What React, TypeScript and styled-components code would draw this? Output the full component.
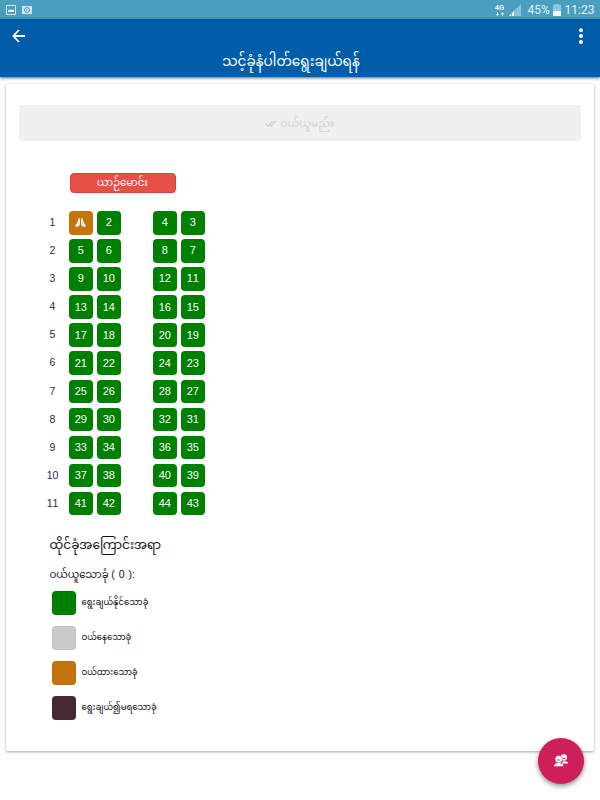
import React from 'react';
import styled, { createGlobalStyle } from 'styled-components';

const Global = createGlobalStyle`
  * { box-sizing: border-box; }
  body { margin: 0; background: #fefefe; font-family: Lato, "Noto Sans Myanmar", Padauk, sans-serif; color: #111; }
`;
const Screen = styled.div`
  position: relative; width: 600px; height: 800px; overflow: hidden;
`;
const StatusBar = styled.div`
  height: 19px; background: #4a9fc0; display: flex; align-items: center;
  padding: 0 7px 0 6px; color: #e3f1f6; font: 12px Roboto, sans-serif;
`;
const StatusIcon = styled.svg<{ $gap: number }>`
  display: block; flex: none; margin-right: ${p => p.$gap}px;
`;
const Spacer = styled.div` flex: 1; `;
const Network = styled.div`
  width: 12px; height: 14px; margin-right: 3px; font: 700 7.5px/9px Roboto, sans-serif; text-align: center;
  svg { display: block; margin: 0 auto; }
`;
const StatusText = styled.span<{ $w: number }>`
  width: ${p => p.$w}px; white-space: nowrap;
`;
const Header = styled.header`
  height: 58px; background: #005da9; color: #fff; box-shadow: 0 1px 3px rgba(0,0,0,.6);
  position: relative;
`;
const Actions = styled.div`
  height: 29px; padding: 9px 16px 0 12px; display: flex; justify-content: space-between;
  svg { display: block; }
`;
const Title = styled.h1`
  margin: 0; width: 582px; text-align: center; font-size: 13.7px; line-height: 25px; font-weight: 400; white-space: nowrap;
`;
const Card = styled.main`
  margin: 7px 6px 0; height: 667px; background: #fff; padding: 21px 13px; border-radius: 2px;
  box-shadow: 0 1px 3px rgba(0,0,0,.35);
`;
const BuyButton = styled.button`
  width: 562px; height: 36px; border: 0; background: #f0f0f0; color: #d2d2d2; display: flex;
  align-items: center; justify-content: center; gap: 3px; font: inherit; font-size: 10.5px; padding: 2px 0 0;
`;
const Driver = styled.div`
  width: 106px; height: 20px; margin: 32px 0 0 50.5px; background: #e75047; border: 1px solid #e03c32;
  border-radius: 4px; color: #fff; text-align: center; font-size: 10.2px; line-height: 17px; white-space: nowrap;
`;
const Seats = styled.div`
  margin: 18px 0 0 23px; display: grid; grid-template-columns: 22px 23px 23px 23px 23px;
  column-gap: 5px; grid-auto-rows: 23.1px; row-gap: 5px; font-family: "Liberation Sans", sans-serif; font-kerning: none;
`;
const RowNumber = styled.div`
  color: #25294e; font-size: 10.5px; line-height: 23px; text-align: center; width: 21px;
`;
const Seat = styled.div<{ $sold?: boolean; $aisle?: boolean }>`
  width: 23.5px; height: 23.5px; border-radius: 4px; background: ${p => (p.$sold ? '#c5730c' : '#008000')};
  color: #fff; font-size: 11px; line-height: 22px; padding-bottom: 1px;
  display: flex; align-items: center; justify-content: center;
  margin-left: ${p => (p.$aisle ? '28px' : '0')};
`;
const Info = styled.section` margin: 16px 0 0 30.5px; `;
const InfoTitle = styled.h2` margin: 0; height: 28px; font-size: 12.2px; line-height: 28px; font-weight: 400; white-space: nowrap; `;
const Selected = styled.div` height: 26px; margin-top: 2px; font-size: 10.2px; line-height: 26px; white-space: nowrap; `;
const Count = styled.span` font: 10.5px "Liberation Sans", sans-serif; word-spacing: 1px; `;
const Legend = styled.ul` list-style: none; margin: 3.5px 0 0 2px; padding: 0; display: flex; flex-direction: column; gap: 11px; `;
const LegendItem = styled.li` height: 24px; display: flex; align-items: center; gap: 6px; font-size: 8.5px; white-space: nowrap; `;
const Swatch = styled.span<{ $color: string }>`
  width: 24px; height: 24px; border-radius: 4px; background: ${p => p.$color}; border: 1px solid rgba(0,0,0,.05);
`;
const Fab = styled.button`
  position: absolute; left: 537.5px; top: 737.5px; width: 46.5px; height: 46.5px; border: 0; padding: 0;
  border-radius: 50%; background: #cf1f5b; box-shadow: 0 2px 5px rgba(0,0,0,.45);
  display: flex; align-items: center; justify-content: center;
`;
const legend = [
  ['#008000', 'ရွေးချယ်နိုင်သောခုံ'],
  ['#cacaca', 'ဝယ်နေသောခုံ'],
  ['#c5730c', 'ဝယ်ထားသောခုံ'],
  ['#462a33', 'ရွေးချယ်၍မရသောခုံ'],
];
const Praying = () => (
  <svg width="11" height="9" viewBox="0 0 12 10" fill="#fff">
    <path d="M5.200 0 3.700.8 2.500 5 0 8.500 1.300 10 4.600 9 5.500 6.500zM6.800 0l1.500.8L9.500 5 12 8.500 10.700 10 7.400 9 6.500 6.500z" />
    <path d="M4.200 4.500v3M7.800 4.500v3" stroke="#c5730c" strokeWidth=".5" />
  </svg>
);

export default function App() {
  return (
    <Screen>
      <Global />
      <StatusBar>
        <StatusIcon $gap={6} width="10" height="10" viewBox="0 0 10 10">
          <path fill="none" stroke="#cfe6ee" d="M.5.5h9v9h-9z" />
          <path fill="#e3f1f6" d="M2 7V5.5l1-1 1 1L5 4l1 1 1-.5 1 1V7z" />
        </StatusIcon>
        <StatusIcon $gap={0} width="10" height="8" viewBox="0 0 10 8">
          <path fill="#cfe6ee" d="M0 0h10v8H0z" />
          <circle cx="5" cy="4" r="2.500" fill="none" stroke="#4a9fc0" />
          <circle cx="5" cy="4" r=".8" fill="#4a9fc0" />
        </StatusIcon>
        <Spacer />
        <Network>4G
          <svg width="8" height="4" viewBox="0 0 8 4" fill="#fff"><path d="M0 2h1V0h1v2h1L1.500 4zM5 2l1.500-2L8 2H7v2H6V2z" /></svg>
        </Network>
        <StatusIcon $gap={7} width="12" height="12" viewBox="0 0 12 12">
          <path fill="#8cc3d7" d="M0 12 12 0v12z" />
          <path fill="#eef8fb" d="M0 12l2-2v2zM3 9l2-2v5H3z" />
        </StatusIcon>
        <StatusText $w={25}>45%</StatusText>
        <StatusIcon $gap={4} width="8" height="12" viewBox="0 0 8 12">
          <path fill="#91c5d8" d="M2 0h4v1h2v11H0V1h2z" /><path fill="#eef8fb" d="M0 7h8v5H0z" />
        </StatusIcon>
        <StatusText $w={28.5}>11:23</StatusText>
      </StatusBar>
      <Header>
        <Actions>
          <svg width="14" height="16" viewBox="0 0 14 16"><path fill="none" stroke="#fff" strokeWidth="1.8" d="M13 8H1.500M7 2 1.300 8 7 14" /></svg>
          <svg width="6" height="17" viewBox="0 0 6 17" fill="#fff"><circle cx="3" cy="2.200" r="2" /><circle cx="3" cy="8" r="2" /><circle cx="3" cy="14" r="2" /></svg>
        </Actions>
        <Title>သင့်ခုံနံပါတ်ရွေးချယ်ရန်</Title>
      </Header>
      <Card>
        <BuyButton>
          <svg width="12" height="8" viewBox="0 0 12 8"><path fill="none" stroke="#d2d2d2" strokeWidth="1.400" d="M.5 3.500 3 6l5-5M5 5l1 1 5-5" /></svg>
          ဝယ်ယူမည်။
        </BuyButton>
        <Driver>ယာဉ်မောင်း</Driver>
        <Seats>
          {Array.from({ length: 11 }, (_, r) => (
            <React.Fragment key={r}>
              <RowNumber>{r + 1}</RowNumber>
              <Seat $sold={r === 0}>{r === 0 ? <Praying /> : r * 4 + 1}</Seat>
              <Seat>{r * 4 + 2}</Seat>
              <Seat $aisle>{r * 4 + 4}</Seat>
              <Seat $aisle>{r * 4 + 3}</Seat>
            </React.Fragment>
          ))}
        </Seats>
        <Info>
          <InfoTitle>ထိုင်ခုံအကြောင်းအရာ</InfoTitle>
          <Selected>ဝယ်ယူသောခုံ <Count>( 0 ):</Count></Selected>
          <Legend>
            {legend.map(([color, label]) => (
              <LegendItem key={color}><Swatch $color={color} /><span>{label}</span></LegendItem>
            ))}
          </Legend>
        </Info>
      </Card>
      <Fab aria-label="Passengers">
        <svg width="14" height="13" viewBox="0 0 14 13" fill="#fff">
          <circle cx="9.800" cy="3.500" r="3.200" /><path d="M8 9.500c0-3 6-3 6 0z" />
          <circle cx="4.800" cy="5.200" r="3.800" stroke="#cf1f5b" strokeWidth=".5" /><path d="M0 12.300C0 8 9.500 8 9.500 12.300z" />
          <path d="M3 6h3.600M9 4.500h2.600" stroke="#cf1f5b" strokeWidth=".9" />
        </svg>
      </Fab>
    </Screen>
  );
}
